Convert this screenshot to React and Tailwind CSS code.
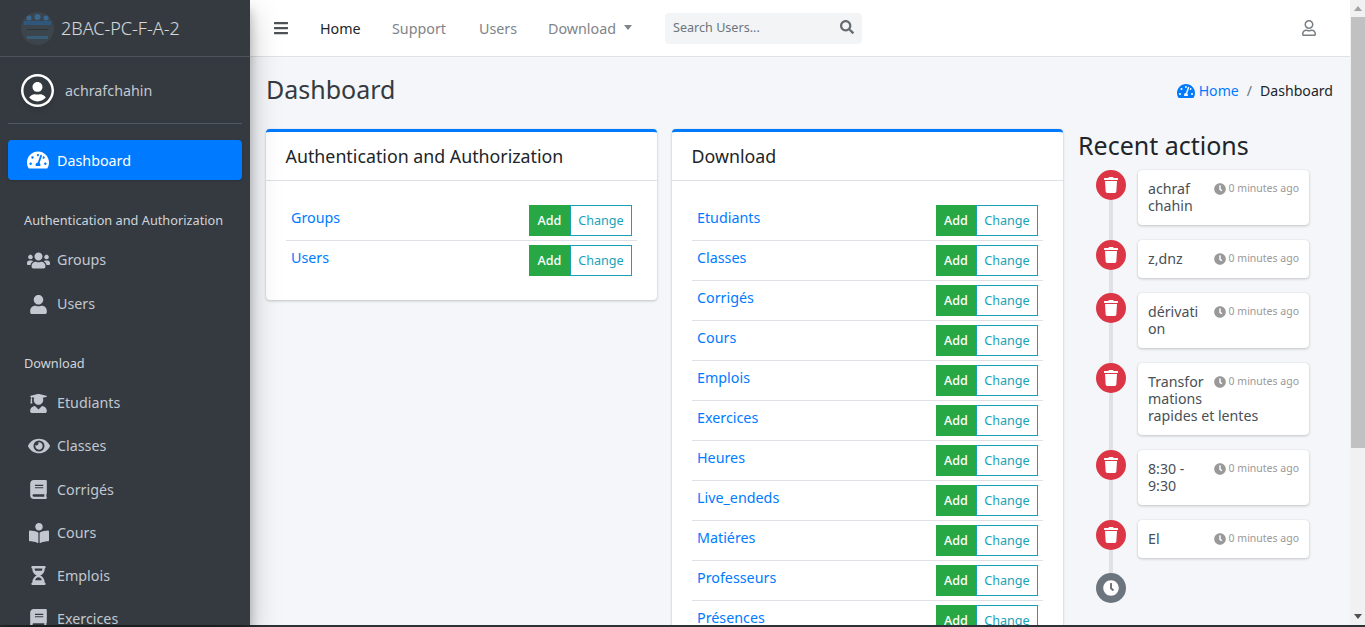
import {
  FaTachometerAlt, FaUsers, FaUser, FaUserGraduate, FaEye, FaBook, FaBookReader,
  FaHourglassHalf, FaTrash, FaClock, FaSearch, FaBars, FaUserCircle, FaRegUser,
} from "react-icons/fa";

const groups = ["Groups", "Users"];
const downloads = ["Etudiants", "Classes", "Corrigés", "Cours", "Emplois", "Exercices", "Heures", "Live_endeds", "Matiéres", "Professeurs", "Présences"];

const sideGroups = [
  { label: "Groups", icon: FaUsers, size: "text-[23px]" },
  { label: "Users", icon: FaUser, size: "text-[19px]" },
];

const sideDownloads = [
  { label: "Etudiants", icon: FaUserGraduate, size: "text-[19px]" },
  { label: "Classes", icon: FaEye, size: "text-[22px]" },
  { label: "Corrigés", icon: FaBook, size: "text-[19px]" },
  { label: "Cours", icon: FaBookReader, size: "text-[20px]" },
  { label: "Emplois", icon: FaHourglassHalf, size: "text-[19px]" },
  { label: "Exercices", icon: FaBook, size: "text-[19px]" },
];

const actions = [
  { lines: ["achraf", "chahin"] },
  { lines: ["z,dnz"] },
  { lines: ["dérivati", "on"] },
  { lines: ["Transfor", "mations", "rapides et lentes"] },
  { lines: ["8:30 -", "9:30"] },
  { lines: ["El"] },
];

function Logo() {
  return (
    <svg width="33" height="33" viewBox="0 0 33 33" className="shrink-0 opacity-80">
      <circle cx="16.5" cy="16.5" r="16.5" fill="#3f4850" />
      <circle cx="8" cy="6" r="2.5" fill="#3a74a8" />
      <circle cx="16.5" cy="5" r="3" fill="#3a74a8" />
      <circle cx="25" cy="6" r="2.5" fill="#3a74a8" />
      <rect x="3" y="9" width="27" height="4" fill="#2d5f8a" />
      <rect x="6" y="17" width="21" height="1" fill="#2a3138" />
      <rect x="6" y="24" width="21" height="3" fill="#3a6685" />
    </svg>
  );
}

function SideItem({ icon: Icon, label, size, className }) {
  return (
    <div className={`flex items-center text-[#c2c7d0] ${className}`}>
      <span className="w-[25px] ml-[26px] mr-[6px] flex justify-center">
        <Icon className={size} />
      </span>
      <span className="text-[14.3px]">{label}</span>
    </div>
  );
}

function Sidebar() {
  return (
    <aside className="w-[250px] shrink-0 bg-[#343a40] relative z-10 shadow-[0_14px_28px_rgba(0,0,0,0.25),0_10px_10px_rgba(0,0,0,0.22)] overflow-hidden">
      <div className="h-[57px] border-b border-[#4b545c] flex items-center pl-[21px]">
        <Logo />
        <span className="ml-[7px] text-[18px] font-light text-white/80">2BAC-PC-F-A-2</span>
      </div>
      <div className="mx-2 h-[67px] border-b border-[#4f5962] flex items-center pl-[13px]">
        <span className="w-[33px] h-[33px] rounded-full bg-white flex items-center justify-center shadow-md">
          <FaUserCircle className="text-[29px] text-[#343a40]" />
        </span>
        <span className="ml-[11px] pt-[1px] text-[14.3px] text-[#c2c7d0]">achrafchahin</span>
      </div>
      <div className="mx-2 mt-4 h-10 rounded bg-[#007bff] text-white flex items-center shadow-sm">
        <FaTachometerAlt className="ml-[19px] text-[22px]" />
        <span className="ml-[8px] pt-[1px] text-[14.3px]">Dashboard</span>
      </div>
      <div className="mt-[30px] ml-6 h-5 leading-5 text-[12.75px] text-[#d0d4db]">Authentication and Authorization</div>
      <SideItem {...sideGroups[0]} className="mt-[19px] h-[22px]" />
      <SideItem {...sideGroups[1]} className="mt-[22px] h-[22px]" />
      <div className="mt-[38px] ml-6 h-5 leading-5 text-[12.75px] text-[#d0d4db]">Download</div>
      <div className="mt-[19px] flex flex-col gap-[21.2px]">
        {sideDownloads.map((d) => (
          <SideItem key={d.label} {...d} className="h-[22px]" />
        ))}
      </div>
    </aside>
  );
}

function Navbar() {
  return (
    <nav className="h-[57px] shrink-0 bg-white border-b border-[#dee2e6] flex items-center">
      <FaBars className="ml-[23px] text-[16px] text-[#4d5257]" />
      <span className="ml-[31px] w-[72px] pt-[1px] text-[14.3px] text-[#212529]">Home</span>
      <span className="w-[87px] pt-[1px] text-[14.3px] text-[#7f8489]">Support</span>
      <span className="w-[69px] pt-[1px] text-[14.3px] text-[#7f8489]">Users</span>
      <span className="w-[76px] pt-[1px] text-[14.3px] text-[#7f8489]">Download</span>
      <span className="w-0 h-0 border-x-[4.5px] border-x-transparent border-t-[5px] border-t-[#7f8489] mb-[2px]" />
      <div className="ml-[33px] w-[197px] h-[31px] rounded bg-[#f2f4f6] flex items-center justify-between pl-2 pr-2">
        <span className="pt-[1px] text-[12.6px] text-[#6c757d]">Search Users...</span>
        <FaSearch className="text-[14px] text-[#666c72] mb-[2px]" />
      </div>
      <FaRegUser className="ml-auto mr-[33px] text-[16px] text-[#7a7f85]" />
    </nav>
  );
}

function ModelRow({ name, last, addWidth }) {
  return (
    <div className={`h-10 flex justify-between pl-[5px] pr-[5px] pt-1 ${last ? "" : "border-b border-[#dee2e6]"}`}>
      <span className="pt-[1px] text-[14.3px] leading-6 text-[#007bff]">{name}</span>
      <div className="flex h-[31px] text-[12.6px]">
        <span className={`${addWidth} pt-[1px] bg-[#28a745] text-white flex items-center justify-center font-medium`}>Add</span>
        <span className="w-[62px] pt-[1px] bg-white border border-[#17a2b8] text-[#17a2b8] flex items-center justify-center">Change</span>
      </div>
    </div>
  );
}

function ModelCard({ title, items, addWidth, className }) {
  return (
    <section className={`w-[391px] shrink-0 bg-white rounded border-t-[3px] border-[#007bff] shadow-[0_0_1px_rgba(0,0,0,0.125),0_1px_3px_rgba(0,0,0,0.2)] ${className}`}>
      <div className="h-[49px] border-b border-[#dee2e6] flex items-center pl-[19.6px]">
        <h3 className="text-[17.8px] text-[#212529]">{title}</h3>
      </div>
      <div className="px-5 pt-5 pb-[19px]">
        {items.map((name, i) => (
          <ModelRow key={name} name={name} addWidth={addWidth} last={i === items.length - 1} />
        ))}
      </div>
    </section>
  );
}

function Timeline() {
  return (
    <div className="relative">
      <div className="absolute left-[31px] top-0 bottom-[14px] w-1 bg-[#dee2e6]" />
      {actions.map((a, i) => (
        <div key={i} className="relative flex items-start mb-[15px]">
          <span className="ml-[18px] w-[30px] h-[30px] rounded-full bg-[#dc3545] text-white flex items-center justify-center">
            <FaTrash className="text-[16px]" />
          </span>
          <div className="ml-3 w-[171px] rounded bg-white shadow-[0_0_1px_rgba(0,0,0,0.125),0_1px_3px_rgba(0,0,0,0.2)] pt-[10px] px-[10px] pb-[11px] text-[14.2px] leading-[17px] text-[#495057]">
            <span className="float-right flex items-center text-[10.5px] leading-[17px] text-[#999]">
              <FaClock className="mr-[3px] text-[12px]" />
              0 minutes ago
            </span>
            {a.lines.map((l) => (
              <div key={l} className="whitespace-nowrap">{l}</div>
            ))}
            <div className="clear-both" />
          </div>
        </div>
      ))}
      <span className="relative ml-[18px] w-[30px] h-[30px] rounded-full bg-[#6c757d] flex items-center justify-center">
        <FaClock className="text-[16px] text-white" />
      </span>
    </div>
  );
}

export default function App() {
  return (
    <div className="h-[627px] overflow-hidden flex flex-col font-['Noto_Sans',sans-serif]">
      <div className="flex-1 min-h-0 flex">
        <Sidebar />
        <main className="flex-1 min-w-0 flex flex-col bg-[#f4f6f9] overflow-hidden">
          <Navbar />
          <div className="h-[72px] shrink-0 flex items-center justify-between pl-4 pr-[17px] pb-[7px]">
            <h1 className="text-[25px] text-[#343a40]">Dashboard</h1>
            <div className="mt-[3px] flex items-center text-[14.1px]">
              <FaTachometerAlt className="text-[18px] text-[#007bff] mr-[4px]" />
              <span className="text-[#007bff]">Home</span>
              <span className="mx-2 text-[#6c757d]">/</span>
              <span className="text-[#212529]">Dashboard</span>
            </div>
          </div>
          <div className="flex items-start pl-4">
            <ModelCard title="Authentication and Authorization" items={groups} addWidth="w-[41px]" />
            <ModelCard title="Download" items={downloads} addWidth="w-[40px]" className="ml-[15px]" />
            <div className="ml-[15px] flex-1 min-w-0">
              <h2 className="h-[41px] text-[25px] leading-[32px] text-[#212529]">Recent actions</h2>
              <Timeline />
            </div>
          </div>
        </main>
        <div className="w-[15px] shrink-0 bg-[#f1f1f1] flex flex-col items-center">
          <div className="h-[17px] flex items-center justify-center">
            <span className="w-0 h-0 border-x-[4px] border-x-transparent border-b-[5px] border-b-[#a3a3a3]" />
          </div>
          <div className="h-[431px] w-[14px] bg-[#c1c1c1]" />
          <div className="mt-auto h-[17px] flex items-center justify-center">
            <span className="w-0 h-0 border-x-[4px] border-x-transparent border-t-[5px] border-t-[#505050]" />
          </div>
        </div>
      </div>
      <div className="h-[2px] shrink-0 bg-[#2d3236]" />
    </div>
  );
}
